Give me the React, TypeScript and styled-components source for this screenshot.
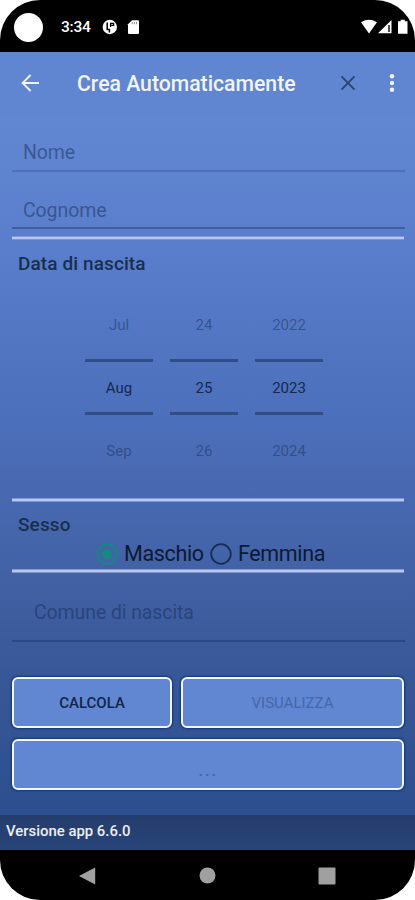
import React from 'react';
import styled, { createGlobalStyle } from 'styled-components';

const GlobalStyle = createGlobalStyle`
  *, *::before, *::after { box-sizing: border-box; }
  body { margin: 0; background: #fff; font-family: Roboto, 'Noto Sans', sans-serif; }
`;

const Phone = styled.div`
  display: flex;
  flex-direction: column;
  width: 415px;
  height: 900px;
  overflow: hidden;
  border-radius: 40px;
  background: #000;
`;

const StatusBar = styled.header`
  display: flex;
  align-items: center;
  height: 52px;
  padding: 2px 7px 0 14px;
  color: #fff;
`;

const Camera = styled.span`
  width: 29px;
  height: 29px;
  border-radius: 50%;
  background: #fff;
`;

const Clock = styled.span`
  width: 41px;
  margin-left: 18px;
  font-size: 15.5px;
  font-weight: 500;
  letter-spacing: -0.2px;
`;

const StatusIcons = styled.span<{ $end?: boolean }>`
  display: flex;
  align-items: center;
  margin-left: ${(p) => (p.$end ? 'auto' : '0')};
`;

const AppBar = styled.div`
  display: flex;
  align-items: center;
  height: 64px;
  padding: 0 16px 3px 20px;
  background: #6085d1;
  color: #f1f5ff;
`;

const AppTitle = styled.h1`
  width: 262px;
  margin: 0 1px 0 37px;
  padding-top: 3px;
  font-size: 21.2px;
  font-weight: 500;
  line-height: 28px;
  white-space: nowrap;
`;

const MenuIcon = styled.svg`
  margin-left: auto;
`;

const Content = styled.main`
  display: flex;
  flex-direction: column;
  height: 699px;
  padding: 0 11px 0 12px;
  background: linear-gradient(#6287d2 0%, #5a7ecc 18%, #4d70bc 42%, #4464a9 62%, #385797 80%, #2d4f8e 100%);
`;

const Field = styled.div<{ $height: number; $indent: number; $line: string; $gap: number; $spacing?: number }>`
  display: flex;
  align-items: flex-end;
  height: ${(p) => p.$height}px;
  margin-right: -1px;
  padding: 0 0 ${(p) => p.$gap}px ${(p) => p.$indent}px;
  border-bottom: 2px solid ${(p) => p.$line};
  color: rgba(20, 43, 86, 0.5);
  font-size: 19.5px;
  line-height: 24px;
  letter-spacing: ${(p) => p.$spacing ?? 0}px;
`;

const Divider = styled.div<{ $top: number }>`
  flex: none;
  height: 4px;
  margin-top: ${(p) => p.$top}px;
  background: linear-gradient(#8299d6 0 1px, #b9c8ee 1px 3px, #7f95cf 3px);
`;

const SectionTitle = styled.h2<{ $top: number; $spacing: number }>`
  margin: ${(p) => p.$top}px 0 0 6px;
  color: #17304f;
  font-size: 19px;
  font-weight: 500;
  line-height: 24px;
  letter-spacing: ${(p) => p.$spacing}px;
`;

const DatePicker = styled.div`
  display: flex;
  justify-content: center;
  gap: 17px;
  height: 222px;
  padding: 37px 8px 0 0;
`;

const Wheel = styled.div`
  display: flex;
  flex-direction: column;
  width: 68px;
  text-align: center;
  font-size: 15px;
`;

const WheelValue = styled.span<{ $current?: boolean }>`
  height: ${(p) => (p.$current ? 56 : 24)}px;
  margin: ${(p) => (p.$current ? '22px 0 24px' : '0')};
  border: solid #314d85;
  border-width: ${(p) => (p.$current ? '3px 0' : '0')};
  color: ${(p) => (p.$current ? '#13294f' : 'rgba(20, 43, 86, 0.47)')};
  line-height: ${(p) => (p.$current ? 52 : 24)}px;
`;

const RadioRow = styled.div`
  display: flex;
  align-items: center;
  height: 34px;
  padding: 0 0 1px 84px;
`;

const RadioOption = styled.label<{ $width: number }>`
  display: flex;
  align-items: center;
  width: ${(p) => p.$width}px;
  color: #0c1a33;
  font-size: 21.5px;
  line-height: 28px;
  letter-spacing: -0.35px;
  white-space: nowrap;
`;

const RadioDot = styled.svg`
  flex: none;
  margin-right: 6px;
`;

const Actions = styled.div`
  display: grid;
  grid-template-columns: 160px 223px;
  grid-template-rows: 51px 51px;
  gap: 11px 9px;
  margin-top: 35px;
`;

const ActionButton = styled.button<{ $muted?: boolean; $wide?: boolean }>`
  grid-column: ${(p) => (p.$wide ? '1 / -1' : 'auto')};
  padding: ${(p) => (p.$wide ? '8px 0 0' : '1px 0 0')};
  border: 2px solid #f2f7ff;
  border-radius: 6px;
  background: #6186d2;
  box-shadow: 0 0 2px 1px #12377c;
  color: ${(p) => (p.$muted ? '#4767aa' : '#10264c')};
  font-family: inherit;
  font-size: ${(p) => (p.$wide ? 20 : 15)}px;
  font-weight: ${(p) => (p.$muted ? 400 : 500)};
  letter-spacing: ${(p) => (p.$wide ? 1.2 : 0)}px;
`;

const Footer = styled.footer`
  height: 35px;
  padding-left: 6px;
  background: linear-gradient(#233c6c, #284579);
  color: #eceff8;
  font-size: 14.9px;
  font-weight: 500;
  line-height: 32px;
`;

const NavBar = styled.nav`
  display: flex;
  align-items: center;
  justify-content: space-between;
  flex: 1;
  padding: 1px 79px 0 79px;
`;

const wheels = [
  ['Jul', 'Aug', 'Sep'],
  ['24', '25', '26'],
  ['2022', '2023', '2024'],
];

function Radio({ checked }: { checked?: boolean }) {
  const color = checked ? '#108b7d' : '#152c55';
  return (
    <RadioDot width="22" height="22" viewBox="0 0 22 22">
      <circle cx="11" cy="11" r="9.8" fill="none" stroke={color} strokeWidth="1.8" />
      {checked && <circle cx="11" cy="11" r="5" fill={color} />}
    </RadioDot>
  );
}

export default function App() {
  return (
    <>
      <GlobalStyle />
      <Phone>
        <StatusBar>
          <Camera />
          <Clock>3:34</Clock>
          <StatusIcons>
            <svg width="37" height="16" viewBox="0 0 37 16">
              <circle cx="7.8" cy="8" r="7.2" fill="#fff" />
              <path d="M5.2 3.6v7h2.2v3" fill="none" stroke="#000" strokeWidth="1.5" />
              <path d="M8.6 8V4.4h3v2H9.4" fill="none" stroke="#000" strokeWidth="1.3" />
              <path d="M30 1.2h6q1 0 1 1V14q0 1-1 1H27q-1 0-1-1V5.2z" fill="#fff" />
              <path d="M30.2 3v2.2M32.4 3v2.2M34.6 3v2.2" stroke="#888" />
            </svg>
          </StatusIcons>
          <StatusIcons $end>
            <svg width="47" height="16" viewBox="0 0 47 16">
              <path d="M0 3.2Q8 -1.5 16 3.2L8 14.5z" fill="#fff" />
              <path d="M17 14.3 30.5 1v13.3z" fill="#fff" />
              <path d="M28 6v7" stroke="#222" strokeWidth="1.6" />
              <path d="M37 2.2h2.7V.8h4.1v1.4h2.7v12.5H37z" fill="#fff" />
            </svg>
          </StatusIcons>
        </StatusBar>

        <AppBar>
          <svg width="20" height="18" viewBox="0 0 20 18" fill="none" stroke="#f1f5ff" strokeWidth="1.8">
            <path d="M10.6 1 2.6 9l8 8M2.8 9H19" />
          </svg>
          <AppTitle>Crea Automaticamente</AppTitle>
          <svg width="17" height="16" viewBox="0 0 17 16" fill="none" stroke="#29436f" strokeWidth="1.8">
            <path d="M1.5 1.4 14.5 14.6M14.5 1.4 1.5 14.6" />
          </svg>
          <MenuIcon width="14" height="18" viewBox="0 0 14 18" fill="#f1f5ff">
            <circle cx="7" cy="2.3" r="2.2" />
            <circle cx="7" cy="9" r="2.2" />
            <circle cx="7" cy="15.7" r="2.2" />
          </MenuIcon>
        </AppBar>

        <Content>
          <Field $height={56} $indent={11} $gap={5} $line="#4d70b8" $spacing={-0.1}>Nome</Field>
          <Field $height={57} $indent={11} $gap={4} $line="#405f9f" $spacing={-0.1}>Cognome</Field>
          <Divider $top={7} />
          <SectionTitle $top={12} $spacing={0.1}>Data di nascita</SectionTitle>
          <DatePicker>
            {wheels.map(([previous, current, next]) => (
              <Wheel key={current}>
                <WheelValue>{previous}</WheelValue>
                <WheelValue $current>{current}</WheelValue>
                <WheelValue>{next}</WheelValue>
              </Wheel>
            ))}
          </DatePicker>
          <Divider $top={0} />
          <SectionTitle $top={11} $spacing={0.1}>Sesso</SectionTitle>
          <RadioRow>
            <RadioOption $width={114}><Radio checked />Maschio</RadioOption>
            <RadioOption $width={116}><Radio />Femmina</RadioOption>
          </RadioRow>
          <Divider $top={-2} />
          <Field $height={69} $indent={22} $gap={15} $line="#2b4884" $spacing={-0.1}>Comune di nascita</Field>
          <Actions>
            <ActionButton>CALCOLA</ActionButton>
            <ActionButton $muted>VISUALIZZA</ActionButton>
            <ActionButton $muted $wide>...</ActionButton>
          </Actions>
        </Content>

        <Footer>Versione app 6.6.0</Footer>
        <NavBar>
          <svg width="17" height="18" viewBox="0 0 17 18"><path d="M0 9 16.2.5v17z" fill="#a0a0a0" /></svg>
          <svg width="17" height="17" viewBox="0 0 17 17"><circle cx="8.5" cy="8.5" r="8" fill="#a0a0a0" /></svg>
          <svg width="18" height="18" viewBox="0 0 18 18"><rect x=".5" y=".5" width="17" height="17" rx="1" fill="#a0a0a0" /></svg>
        </NavBar>
      </Phone>
    </>
  );
}
